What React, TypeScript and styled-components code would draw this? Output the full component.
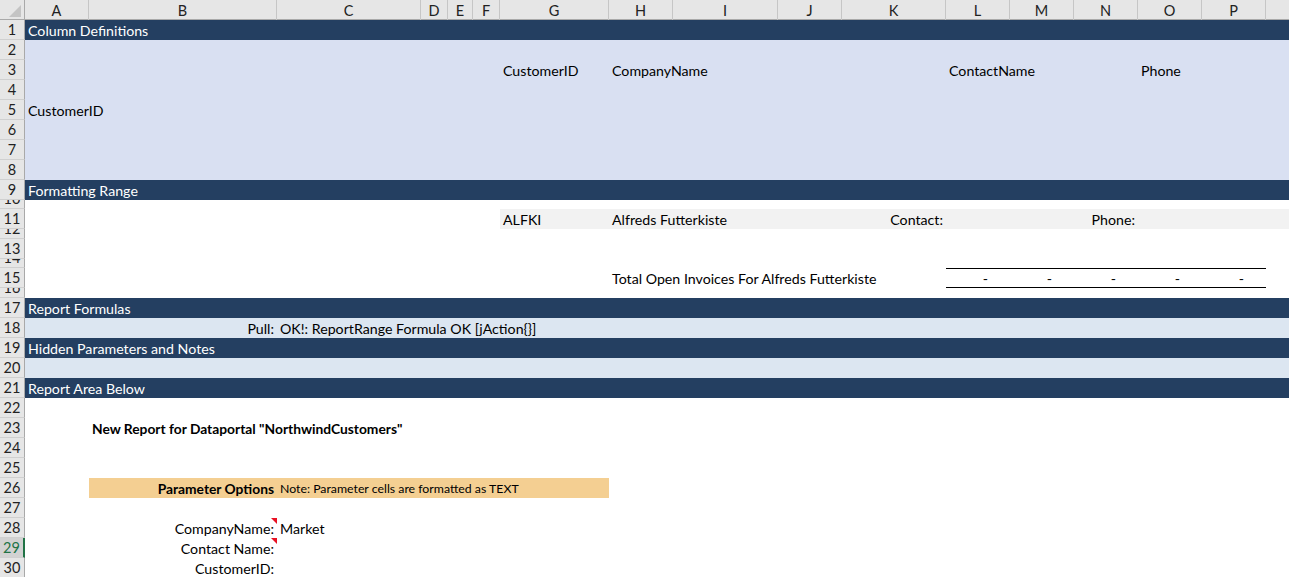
import React from 'react';
import styled, { createGlobalStyle } from 'styled-components';

const FONT = `"Lato", "Liberation Sans", sans-serif`;
const FS = 14.2;

const COLS = [
  { l: 'A', w: 64 }, { l: 'B', w: 188 }, { l: 'C', w: 144 }, { l: 'D', w: 27 },
  { l: 'E', w: 25 }, { l: 'F', w: 27 }, { l: 'G', w: 109 }, { l: 'H', w: 64 },
  { l: 'I', w: 105 }, { l: 'J', w: 64 }, { l: 'K', w: 104 }, { l: 'L', w: 64 },
  { l: 'M', w: 64 }, { l: 'N', w: 64 }, { l: 'O', w: 64 }, { l: 'P', w: 64 },
  { l: 'Q', w: 64 },
];
const TEMPLATE = `25px ${COLS.map((c) => `${c.w}px`).join(' ')}`;
const col = (letter: string) => COLS.findIndex((c) => c.l === letter) + 2;

type Variant = 'band' | 'lavender' | 'pale' | 'plain';
const BG: Record<Variant, string> = {
  band: '#243f61',
  lavender: '#d9e0f2',
  pale: '#dce6f1',
  plain: '#ffffff',
};

const Global = createGlobalStyle`
  html, body { margin: 0; padding: 0; background: #fff; overflow: hidden; }
  body { font-family: ${FONT}; font-size: ${FS}px; color: #000; }
  * { box-sizing: border-box; }
`;

const Sheet = styled.div`
  width: 1289px;
  height: 577px;
  overflow: hidden;
  display: flex;
  flex-direction: column;
`;

const HeaderRow = styled.div`
  display: grid;
  grid-template-columns: ${TEMPLATE};
  height: 20px;
  flex: none;
  background: #e6e6e6;
  border-bottom: 1px solid #a9a9a9;
`;

const Corner = styled.div`
  border-right: 1px solid #a9a9a9;
  display: flex;
  align-items: flex-end;
  justify-content: flex-end;
  padding: 0 3px 3px 0;
`;

const ColHead = styled.div`
  display: flex;
  align-items: center;
  justify-content: center;
  border-right: 1px solid #c6c6c6;
  color: #222;
  font-size: 14.5px;
  line-height: 19px;
  padding-top: 1px;
`;

const Row = styled.div<{ $h: number; $v: Variant }>`
  display: grid;
  grid-template-columns: ${TEMPLATE};
  grid-template-rows: ${(p) => p.$h}px;
  height: ${(p) => p.$h}px;
  flex: none;
  background: ${(p) => BG[p.$v]};
  color: ${(p) => (p.$v === 'band' ? '#ffffff' : '#000000')};
`;

const RowHead = styled.div<{ $sel?: boolean }>`
  grid-column: 1;
  grid-row: 1;
  background: ${(p) => (p.$sel ? '#d2d2d2' : '#e6e6e6')};
  border-bottom: 1px solid #d0d0d0;
  border-right: ${(p) => (p.$sel ? '2px solid #217346' : '1px solid #a9a9a9')};
  color: ${(p) => (p.$sel ? '#217346' : '#222')};
  font-size: 14.5px;
  display: flex;
  align-items: flex-end;
  justify-content: center;
  overflow: hidden;
  span {
    display: block;
    line-height: 19px;
    padding-top: 1px;
    flex: none;
  }
`;

const Fill = styled.div<{ $from: number; $to: number; $bg: string }>`
  grid-row: 1;
  grid-column: ${(p) => p.$from} / ${(p) => p.$to};
  background: ${(p) => p.$bg};
`;

const Cell = styled.div<{ $col: number; $right?: boolean; $bold?: boolean; $small?: boolean }>`
  grid-row: 1;
  grid-column: ${(p) => p.$col} / span 1;
  position: relative;
  display: flex;
  align-items: center;
  justify-content: ${(p) => (p.$right ? 'flex-end' : 'flex-start')};
  padding: 1px 3px 0;
  white-space: nowrap;
  min-width: 0;
  overflow: visible;
  font-weight: ${(p) => (p.$bold ? 700 : 400)};
  font-size: ${(p) => (p.$small ? 12.3 : p.$bold ? 13.8 : FS)}px;
  line-height: 19px;
`;

const TotalCell = styled.div<{ $col: number }>`
  grid-row: 1;
  grid-column: ${(p) => p.$col} / span 1;
  border-top: 1px solid #000;
  border-bottom: 1px solid #000;
  display: flex;
  align-items: center;
  justify-content: flex-end;
  padding: 1px 22px 0 0;
  line-height: 17px;
`;

const CommentMark = styled.span`
  position: absolute;
  top: 0;
  right: 0;
  width: 0;
  height: 0;
  border-top: 6px solid #e81123;
  border-left: 6px solid transparent;
`;

type CellDef = {
  c: string;
  t: string;
  right?: boolean;
  bold?: boolean;
  small?: boolean;
  comment?: boolean;
};
type RowDef = {
  n: number;
  h: number;
  v: Variant;
  cells?: CellDef[];
  fill?: { from: string; to: string | null; bg: string };
  totals?: string[];
  sel?: boolean;
};

const ROWS: RowDef[] = [
  { n: 1, h: 20, v: 'band', cells: [{ c: 'A', t: 'Column Definitions' }] },
  { n: 2, h: 20, v: 'lavender' },
  {
    n: 3, h: 20, v: 'lavender',
    cells: [
      { c: 'G', t: 'CustomerID' },
      { c: 'H', t: 'CompanyName' },
      { c: 'L', t: 'ContactName' },
      { c: 'O', t: 'Phone' },
    ],
  },
  { n: 4, h: 20, v: 'lavender' },
  { n: 5, h: 20, v: 'lavender', cells: [{ c: 'A', t: 'CustomerID' }] },
  { n: 6, h: 20, v: 'lavender' },
  { n: 7, h: 20, v: 'lavender' },
  { n: 8, h: 20, v: 'lavender' },
  { n: 9, h: 20, v: 'band', cells: [{ c: 'A', t: 'Formatting Range' }] },
  { n: 10, h: 9, v: 'plain' },
  {
    n: 11, h: 20, v: 'plain',
    fill: { from: 'G', to: null, bg: '#f2f2f2' },
    cells: [
      { c: 'G', t: 'ALFKI' },
      { c: 'H', t: 'Alfreds Futterkiste' },
      { c: 'K', t: 'Contact:', right: true },
      { c: 'N', t: 'Phone:', right: true },
    ],
  },
  { n: 12, h: 10, v: 'plain' },
  { n: 13, h: 20, v: 'plain' },
  { n: 14, h: 9, v: 'plain' },
  {
    n: 15, h: 20, v: 'plain',
    cells: [{ c: 'H', t: 'Total Open Invoices For Alfreds Futterkiste' }],
    totals: ['L', 'M', 'N', 'O', 'P'],
  },
  { n: 16, h: 10, v: 'plain' },
  { n: 17, h: 20, v: 'band', cells: [{ c: 'A', t: 'Report Formulas' }] },
  {
    n: 18, h: 20, v: 'pale',
    cells: [
      { c: 'B', t: 'Pull:', right: true },
      { c: 'C', t: 'OK!: ReportRange Formula OK [jAction{}]' },
    ],
  },
  { n: 19, h: 20, v: 'band', cells: [{ c: 'A', t: 'Hidden Parameters and Notes' }] },
  { n: 20, h: 20, v: 'pale' },
  { n: 21, h: 20, v: 'band', cells: [{ c: 'A', t: 'Report Area Below' }] },
  { n: 22, h: 20, v: 'plain' },
  {
    n: 23, h: 20, v: 'plain',
    cells: [{ c: 'B', t: 'New Report for Dataportal "NorthwindCustomers"', bold: true }],
  },
  { n: 24, h: 20, v: 'plain' },
  { n: 25, h: 20, v: 'plain' },
  {
    n: 26, h: 20, v: 'plain',
    fill: { from: 'B', to: 'H', bg: '#f4cf92' },
    cells: [
      { c: 'B', t: 'Parameter Options', right: true, bold: true },
      { c: 'C', t: 'Note: Parameter cells are formatted as TEXT', small: true },
    ],
  },
  { n: 27, h: 20, v: 'plain' },
  {
    n: 28, h: 20, v: 'plain',
    cells: [
      { c: 'B', t: 'CompanyName:', right: true, comment: true },
      { c: 'C', t: 'Market' },
    ],
  },
  {
    n: 29, h: 20, v: 'plain', sel: true,
    cells: [{ c: 'B', t: 'Contact Name:', right: true, comment: true }],
  },
  { n: 30, h: 20, v: 'plain', cells: [{ c: 'B', t: 'CustomerID:', right: true }] },
];

function CornerTriangle() {
  return (
    <svg width="12" height="12" viewBox="0 0 12 12">
      <polygon points="12,0 12,12 0,12" fill="#c4c4c4" />
    </svg>
  );
}

export default function App() {
  return (
    <>
      <Global />
      <Sheet>
        <HeaderRow>
          <Corner>
            <CornerTriangle />
          </Corner>
          {COLS.map((c) => (
            <ColHead key={c.l}>{c.l}</ColHead>
          ))}
        </HeaderRow>
        {ROWS.map((r) => (
          <Row key={r.n} $h={r.h} $v={r.v}>
            <RowHead $sel={r.sel}>
              <span>{r.n}</span>
            </RowHead>
            {r.fill && (
              <Fill
                $from={col(r.fill.from)}
                $to={r.fill.to ? col(r.fill.to) : -1}
                $bg={r.fill.bg}
              />
            )}
            {r.totals?.map((c) => (
              <TotalCell key={c} $col={col(c)}>
                -
              </TotalCell>
            ))}
            {r.cells?.map((c) => (
              <Cell
                key={c.c}
                $col={col(c.c)}
                $right={c.right}
                $bold={c.bold}
                $small={c.small}
              >
                {c.t}
                {c.comment && <CommentMark />}
              </Cell>
            ))}
          </Row>
        ))}
      </Sheet>
    </>
  );
}
